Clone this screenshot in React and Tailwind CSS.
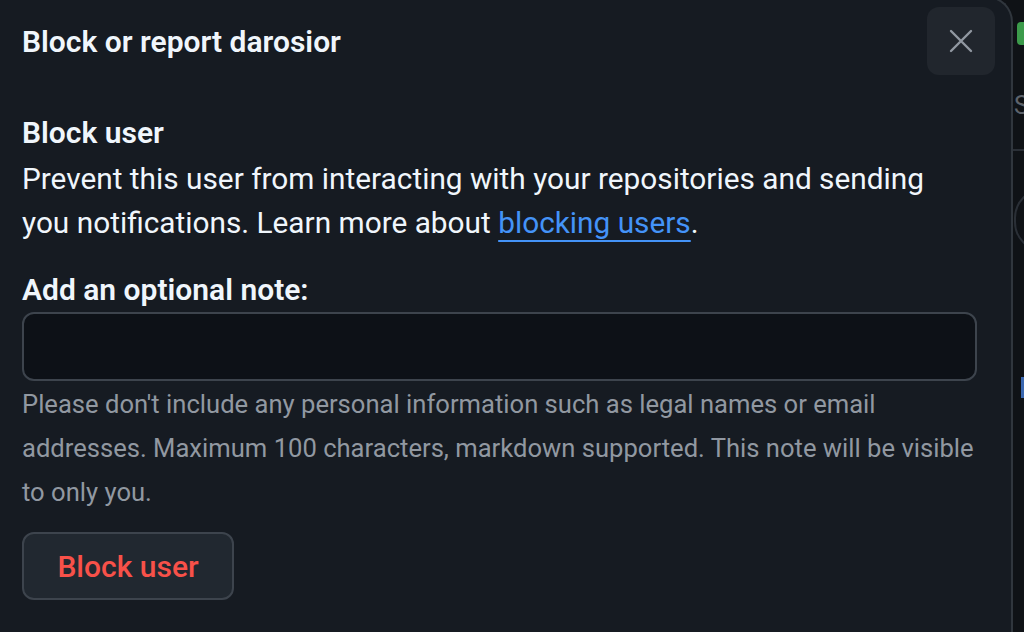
import React from 'react';

const font = { fontFamily: 'Roboto, "Noto Sans", sans-serif' };

const BackdropStrip = () => (
    <div className="relative flex-1 bg-[#0f1216] overflow-hidden">
        <div className="absolute left-[4px] top-[22px] w-[12px] h-[23px] rounded-[4px] bg-[#3c9b4b]" />
        <div className="absolute left-[1px] top-[93px] text-[25px] leading-none text-[#5d636b]">S</div>
        <div className="absolute left-0 top-[149px] w-full h-[2px] bg-[#2a2f36]" />
        <div className="absolute left-[1px] top-[188px] w-[60px] h-[64px] rounded-full border-2 border-[#2a2f36]" />
        <div className="absolute left-[8px] top-[377px] w-[10px] h-[21px] bg-[#3a67b0]" />
    </div>
);

const App = () => {
    return (
        <div className="flex w-[1024px] h-[632px] overflow-hidden bg-[#0f1216]" style={font}>
            <div className="w-[1013px] shrink-0 -mt-[4px] h-[660px] bg-[#161b22] border-r-2 border-t-2 border-[#30363d] rounded-tr-[26px] flex flex-col">
                <div className="flex items-start justify-between pl-[22px] pr-[16px] pt-[9px]">
                    <h1 className="pt-[15px] text-[30px] leading-[40px] font-semibold text-[#f0f6fc]">
                        Block or report darosior
                    </h1>
                    <button className="w-[68px] h-[68px] rounded-[12px] bg-[#21262d] flex items-center justify-center">
                        <svg width="24" height="24" viewBox="0 0 24 24" fill="none" stroke="#9198a1" strokeWidth="2.4" strokeLinecap="round">
                            <path d="M2 2L22 22M22 2L2 22" />
                        </svg>
                    </button>
                </div>

                <div className="pl-[22px] pr-[34px] pt-[36px]">
                    <h2 className="text-[30px] leading-[44px] font-semibold text-[#f0f6fc]">Block user</h2>
                    <p className="mt-[2px] text-[29.8px] leading-[44px] text-[#f0f6fc]">
                        Prevent this user from interacting with your repositories and sending you notifications. Learn more about{' '}
                        <a href="#" className="text-[#4493f8] underline underline-offset-[7px] decoration-2">blocking users</a>.
                    </p>

                    <label className="block mt-[25px] text-[30px] leading-[40px] font-semibold text-[#f0f6fc]">
                        Add an optional note:
                    </label>
                    <input
                        type="text"
                        className="mt-[2px] block w-full h-[69px] rounded-[12px] border-2 border-[#3d444d] bg-[#0d1117] px-4 text-[30px] text-[#f0f6fc] outline-none"
                    />
                    <p className="mt-[1px] text-[25.6px] leading-[44px] text-[#9198a1]">
                        Please don't include any personal information such as legal names or email addresses. Maximum 100 characters, markdown supported. This note will be visible to only you.
                    </p>

                    <button className="mt-[18px] w-[212px] h-[68px] rounded-[12px] border-2 border-[#3d444d] bg-[#212830] text-[30px] font-medium text-[#f85149]">
                        Block user
                    </button>
                </div>
            </div>
            <BackdropStrip />
        </div>
    );
};

export default App;
